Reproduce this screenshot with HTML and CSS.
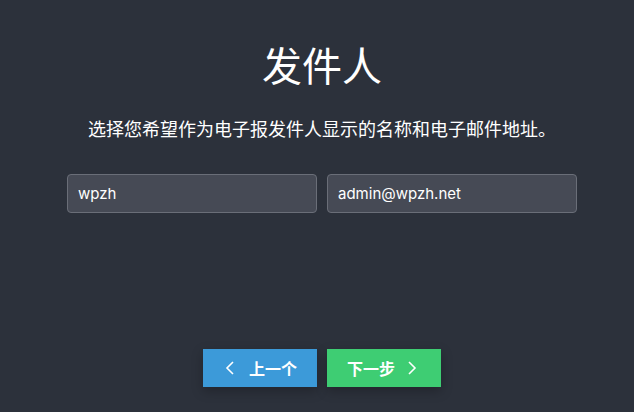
FILE: index.html
```html
<!DOCTYPE html>
<html>

<head>
  <link rel="stylesheet" href="styles.css">
</head>

<body>
  <div class="page">
    <h1 class="title">发件人</h1>
    <p class="desc">选择您希望作为电子报发件人显示的名称和电子邮件地址。</p>
    <div class="fields">
      <input class="field" type="text" value="wpzh">
      <input class="field" type="text" value="admin@wpzh.net">
    </div>
    <div class="actions">
      <button class="btn btn-prev">
        <svg class="arrow" width="10" height="14" viewBox="0 0 10 14"><path d="M8 1 L2 7 L8 13" /></svg>
        上一个
      </button>
      <button class="btn btn-next">
        下一步
        <svg class="arrow" width="10" height="14" viewBox="0 0 10 14"><path d="M2 1 L8 7 L2 13" /></svg>
      </button>
    </div>
  </div>
</body>

</html>
```

FILE: styles.css
```css
html,
body {
  margin: 0;
  height: 100%;
}

body {
  background-color: #2c313b;
  color: #ffffff;
  font-family: "Noto Sans CJK SC", "Liberation Sans", sans-serif;
}

.page {
  display: flex;
  flex-direction: column;
  align-items: center;
  padding-left: 10px;
}

.title {
  font-size: 40px;
  font-weight: normal;
  margin: 36px 0 0;
  line-height: 56px;
}

.desc {
  font-size: 18px;
  margin: 22px 0 0;
  line-height: 28px;
}

.fields {
  display: flex;
  gap: 10px;
  margin-top: 32px;
}

.field {
  width: 250px;
  height: 39px;
  box-sizing: border-box;
  background-color: #464a55;
  border: 1px solid #6a6e78;
  border-radius: 4px;
  color: #ffffff;
  font-family: "Inter", "Liberation Sans", sans-serif;
  font-size: 15px;
  padding: 0 10px;
  outline: none;
}

.actions {
  display: flex;
  gap: 10px;
  margin-top: 136px;
}

.btn {
  width: 114px;
  height: 38px;
  border: none;
  color: #ffffff;
  font-family: "Noto Sans CJK SC", sans-serif;
  font-size: 16px;
  font-weight: bold;
  cursor: pointer;
  box-shadow: 0 4px 12px rgba(0, 0, 0, 0.25);
  display: flex;
  align-items: center;
  justify-content: flex-start;
  padding: 0;
}

.btn-prev {
  background-color: #3c9ad9;
  padding-left: 22px;
  gap: 14px;
}

.btn-next {
  background-color: #3ecd73;
  padding-left: 20px;
  gap: 12px;
}

.arrow path {
  fill: none;
  stroke: #ffffff;
  stroke-width: 1.6;
}
```
